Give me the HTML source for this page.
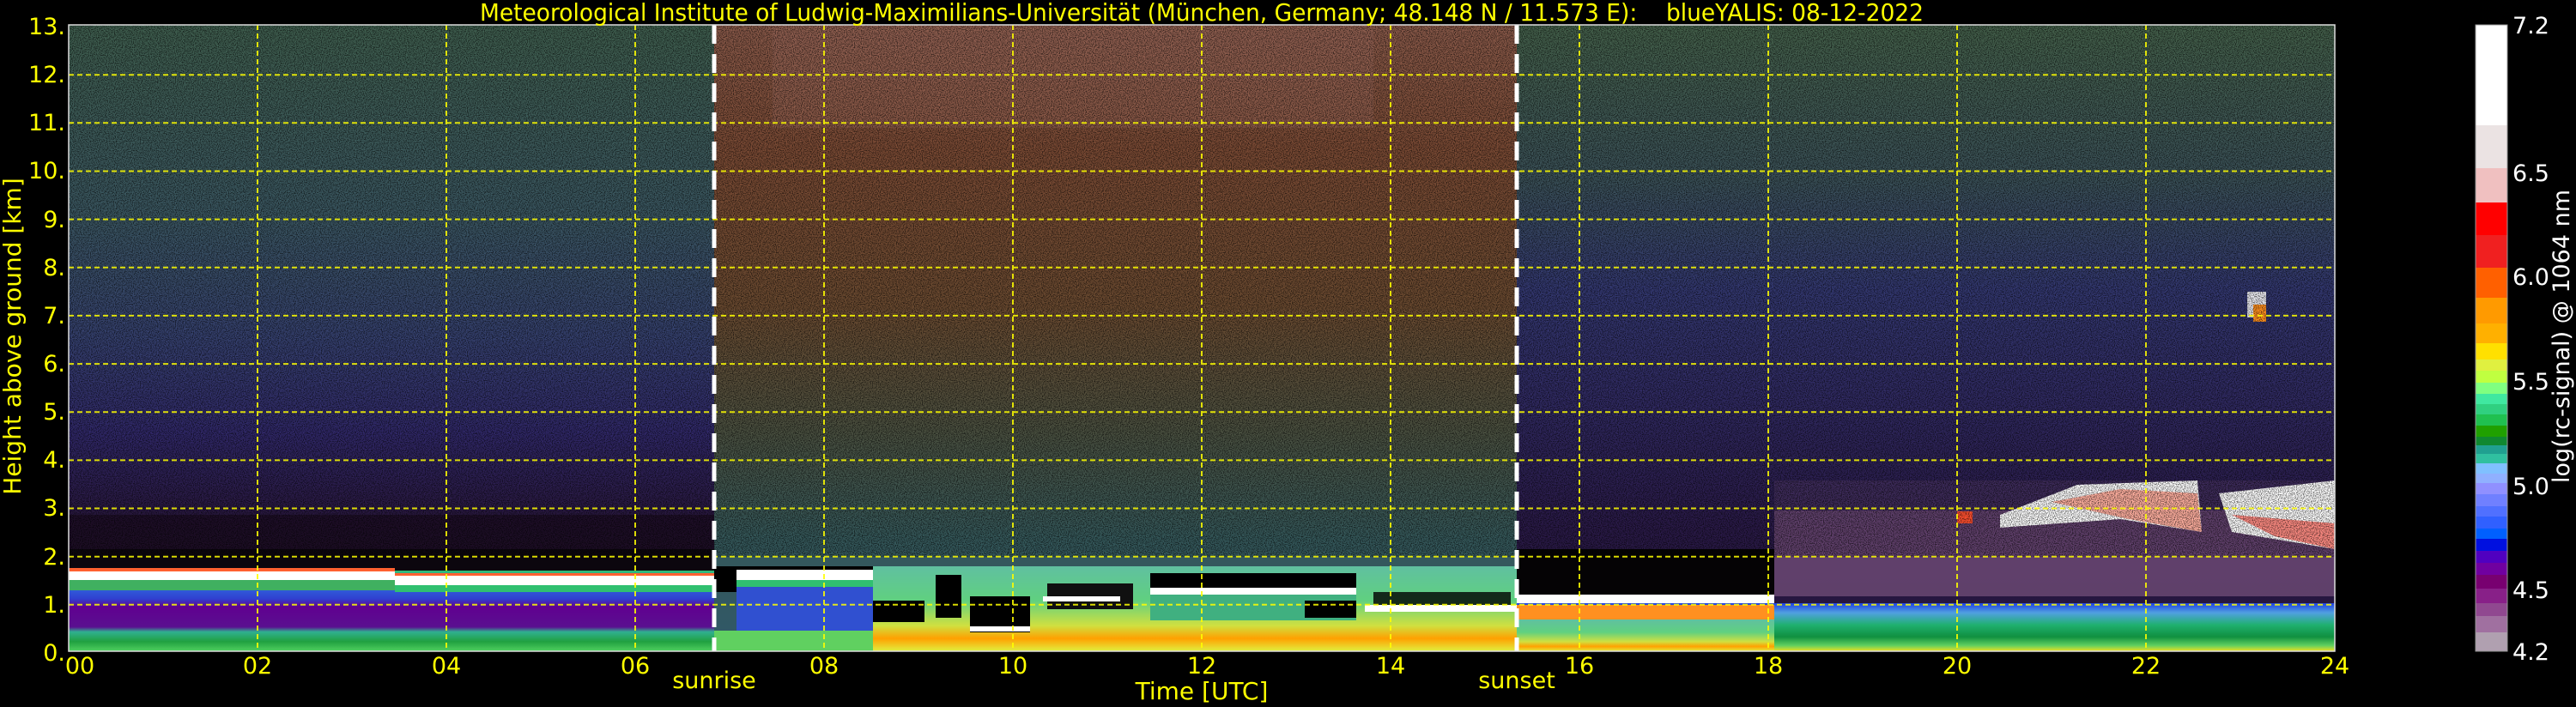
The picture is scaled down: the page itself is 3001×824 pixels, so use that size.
<!DOCTYPE html>
<html><head><meta charset="utf-8"><style>
html,body{margin:0;padding:0;background:#000;}
svg{display:block}
text{font-family:"DejaVu Sans","Liberation Sans",sans-serif;fill:#ffff00}
</style></head><body>
<svg width="3001" height="824" viewBox="0 0 3001 824" xmlns="http://www.w3.org/2000/svg">
<defs>
<filter id="spk" x="0" y="0" width="100%" height="100%">
<feTurbulence type="fractalNoise" baseFrequency="0.9" numOctaves="1" seed="3" result="n"/>
<feColorMatrix type="matrix" values="0 0 0 0 0  0 0 0 0 0  0 0 0 0 0  4 0 0 0 -1.7" />
</filter>
<linearGradient id="gA" x1="0" y1="0" x2="0" y2="1">
<stop offset="0" stop-color="#3f5e4e"/>
<stop offset="0.3" stop-color="#3a5660"/>
<stop offset="0.5" stop-color="#35406e"/>
<stop offset="0.65" stop-color="#302868"/>
<stop offset="0.8" stop-color="#28163a"/>
<stop offset="0.92" stop-color="#1c0c22"/>
<stop offset="1" stop-color="#120812"/>
</linearGradient>
<linearGradient id="gB" x1="0" y1="0" x2="0" y2="1">
<stop offset="0" stop-color="#8a5a4a"/>
<stop offset="0.2" stop-color="#7a4a34"/>
<stop offset="0.45" stop-color="#6a4a30"/>
<stop offset="0.65" stop-color="#4a5040"/>
<stop offset="0.82" stop-color="#35585a"/>
<stop offset="1" stop-color="#305868"/>
</linearGradient>
<linearGradient id="gC" x1="0" y1="0" x2="0" y2="1">
<stop offset="0" stop-color="#44604a"/>
<stop offset="0.25" stop-color="#3a5058"/>
<stop offset="0.42" stop-color="#333870"/>
<stop offset="0.6" stop-color="#302a62"/>
<stop offset="0.8" stop-color="#2a1a48"/>
<stop offset="1" stop-color="#24143a"/>
</linearGradient>
<linearGradient id="blA" x1="0" y1="0" x2="0" y2="1">
<stop offset="0" stop-color="#30c070"/>
<stop offset="0.15" stop-color="#3070e0"/>
<stop offset="0.35" stop-color="#3040d0"/>
<stop offset="0.45" stop-color="#600090"/>
<stop offset="0.7" stop-color="#5a1090"/>
<stop offset="0.76" stop-color="#30b090"/>
<stop offset="0.88" stop-color="#20a040"/>
<stop offset="1" stop-color="#50d060"/>
</linearGradient>
<linearGradient id="blB" x1="0" y1="0" x2="0" y2="1">
<stop offset="0" stop-color="#60c0a0"/>
<stop offset="0.4" stop-color="#60d080"/>
<stop offset="0.7" stop-color="#d0e040"/>
<stop offset="0.85" stop-color="#ffa000"/>
<stop offset="1" stop-color="#e0f040"/>
</linearGradient>
<linearGradient id="blC" x1="0" y1="0" x2="0" y2="1">
<stop offset="0" stop-color="#2040e0"/>
<stop offset="0.2" stop-color="#50a0e0"/>
<stop offset="0.45" stop-color="#20b070"/>
<stop offset="0.7" stop-color="#109040"/>
<stop offset="0.88" stop-color="#60d060"/>
<stop offset="1" stop-color="#f0e020"/>
</linearGradient>
</defs>

<rect x="80" y="29" width="752" height="730" fill="url(#gA)"/>
<rect x="832" y="29" width="935" height="730" fill="url(#gB)"/>
<rect x="1767" y="29" width="953" height="730" fill="url(#gC)"/>
<rect x="900" y="29" width="700" height="120" fill="#9a6a5c" opacity="0.4"/>
<rect x="80" y="640" width="752" height="26" fill="#0c060e"/>
<rect x="80" y="600" width="752" height="40" fill="#1a0c20" opacity="0.7"/>
<rect x="80" y="665" width="752" height="94" fill="url(#blA)"/>
<rect x="80" y="662" width="380" height="6" fill="#ff6030"/>
<rect x="80" y="666" width="380" height="10" fill="#ffffff"/>
<rect x="460" y="668" width="372" height="5" fill="#ff6030"/>
<rect x="460" y="671" width="372" height="11" fill="#ffffff"/>
<rect x="460" y="682" width="372" height="8" fill="#30c070"/>
<rect x="80" y="676" width="380" height="12" fill="#40b060"/>
<rect x="832" y="660" width="185" height="30" fill="#000"/>
<rect x="858" y="664" width="160" height="12" fill="#ffffff"/>
<rect x="858" y="676" width="160" height="8" fill="#30c070"/>
<rect x="858" y="684" width="160" height="55" fill="#3050d0"/>
<rect x="832" y="735" width="185" height="24" fill="#60d060"/>
<rect x="1017" y="660" width="750" height="99" fill="url(#blB)"/>
<rect x="1017" y="700" width="60" height="25" fill="#000"/>
<rect x="1090" y="670" width="30" height="50" fill="#000"/>
<rect x="1130" y="695" width="70" height="42" fill="#000"/>
<rect x="1130" y="730" width="70" height="6" fill="#fff"/>
<rect x="1220" y="680" width="100" height="30" fill="#101010"/>
<rect x="1215" y="695" width="90" height="6" fill="#fff"/>
<rect x="1340" y="668" width="240" height="22" fill="#000"/>
<rect x="1340" y="685" width="240" height="8" fill="#fff"/>
<rect x="1340" y="693" width="240" height="30" fill="#40b080"/>
<rect x="1520" y="700" width="60" height="20" fill="#000"/>
<rect x="1600" y="690" width="160" height="20" fill="#000" opacity="0.8"/>
<rect x="1590" y="705" width="177" height="8" fill="#fff"/>
<rect x="1767" y="640" width="300" height="55" fill="#050305"/>
<rect x="2067" y="595" width="653" height="100" fill="#6a4872" opacity="0.85"/>
<rect x="2067" y="560" width="653" height="35" fill="#4a3460" opacity="0.6"/>
<rect x="1767" y="693" width="300" height="12" fill="#fff"/>
<rect x="1767" y="703" width="953" height="56" fill="url(#blC)"/>
<rect x="1767" y="705" width="300" height="20" fill="#ff9020"/>
<rect x="1767" y="722" width="300" height="37" fill="url(#blB)"/>
<rect x="2280" y="596" width="18" height="14" fill="#ff5030"/>
<path d="M2330 600 L2420 565 L2560 560 L2565 620 L2470 605 L2330 615Z" fill="#fff"/>
<path d="M2390 585 L2470 570 L2560 575 L2565 620 L2480 605Z" fill="#ff6040" opacity="0.5"/>
<path d="M2585 575 L2720 560 L2720 640 L2660 630 L2600 620Z" fill="#fff"/>
<path d="M2600 600 L2720 610 L2720 640 L2650 625Z" fill="#ff4030" opacity="0.6"/>
<rect x="2618" y="340" width="22" height="30" fill="#ffffff" opacity="0.9"/>
<rect x="2625" y="355" width="15" height="20" fill="#ff9020"/>
<rect x="80" y="29" width="2640" height="620" filter="url(#spk)" opacity="0.6"/>

<g stroke="#ffff00" stroke-width="2" stroke-dasharray="6,4" opacity="0.85">
<line x1="80" y1="87.2" x2="2720" y2="87.2"/><line x1="80" y1="143.3" x2="2720" y2="143.3"/>
<line x1="80" y1="199.5" x2="2720" y2="199.5"/><line x1="80" y1="255.6" x2="2720" y2="255.6"/>
<line x1="80" y1="311.8" x2="2720" y2="311.8"/><line x1="80" y1="367.9" x2="2720" y2="367.9"/>
<line x1="80" y1="424.1" x2="2720" y2="424.1"/><line x1="80" y1="480.2" x2="2720" y2="480.2"/>
<line x1="80" y1="536.4" x2="2720" y2="536.4"/><line x1="80" y1="592.5" x2="2720" y2="592.5"/>
<line x1="80" y1="648.7" x2="2720" y2="648.7"/><line x1="80" y1="704.8" x2="2720" y2="704.8"/>
<line x1="300" y1="29" x2="300" y2="759"/><line x1="520" y1="29" x2="520" y2="759"/>
<line x1="740" y1="29" x2="740" y2="759"/><line x1="960" y1="29" x2="960" y2="759"/>
<line x1="1180" y1="29" x2="1180" y2="759"/><line x1="1400" y1="29" x2="1400" y2="759"/>
<line x1="1620" y1="29" x2="1620" y2="759"/><line x1="1840" y1="29" x2="1840" y2="759"/>
<line x1="2060" y1="29" x2="2060" y2="759"/><line x1="2280" y1="29" x2="2280" y2="759"/>
<line x1="2500" y1="29" x2="2500" y2="759"/>
</g>
<g stroke="#fff" stroke-width="5" stroke-dasharray="22,12">
<line x1="832" y1="29" x2="832" y2="759"/><line x1="1767" y1="29" x2="1767" y2="759"/>
</g>
<rect x="80" y="29" width="2640" height="730" fill="none" stroke="#ddd" stroke-width="1.5"/>

<text x="1400" y="24" font-size="28" text-anchor="middle" textLength="1682" lengthAdjust="spacingAndGlyphs">Meteorological Institute of Ludwig-Maximilians-Universität (München, Germany; 48.148 N / 11.573 E):&#160;&#160;&#160;&#160;blueYALIS: 08-12-2022</text>

<g font-size="27" text-anchor="end">
<text x="76" y="40">13.</text><text x="76" y="96">12.</text><text x="76" y="152">11.</text>
<text x="76" y="208">10.</text><text x="76" y="265">9.</text><text x="76" y="321">8.</text>
<text x="76" y="377">7.</text><text x="76" y="433">6.</text><text x="76" y="489">5.</text>
<text x="76" y="545">4.</text><text x="76" y="601">3.</text><text x="76" y="658">2.</text>
<text x="76" y="714">1.</text><text x="76" y="770">0.</text>
</g>
<text transform="translate(24,392) rotate(-90)" font-size="28" text-anchor="middle">Height above ground [km]</text>

<g font-size="27" text-anchor="middle">
<text x="93" y="785">00</text><text x="300" y="785">02</text><text x="520" y="785">04</text>
<text x="740" y="785">06</text><text x="960" y="785">08</text><text x="1180" y="785">10</text>
<text x="1400" y="785">12</text><text x="1620" y="785">14</text><text x="1840" y="785">16</text>
<text x="2060" y="785">18</text><text x="2280" y="785">20</text><text x="2500" y="785">22</text>
<text x="2720" y="785">24</text>
<text x="832" y="802">sunrise</text><text x="1767" y="802">sunset</text>
<text x="1400" y="815" font-size="28">Time [UTC]</text>
</g>

<g>
<rect x="2884" y="29" width="37" height="117" fill="#ffffff"/>
<rect x="2884" y="146" width="37" height="50" fill="#ebe3e3"/>
<rect x="2884" y="196" width="37" height="40" fill="#f0c0c0"/>
<rect x="2884" y="236" width="37" height="38" fill="#ff0000"/>
<rect x="2884" y="274" width="37" height="38" fill="#f02020"/>
<rect x="2884" y="312" width="37" height="35" fill="#ff6000"/>
<rect x="2884" y="347" width="37" height="30" fill="#ff9a00"/>
<rect x="2884" y="377" width="37" height="23" fill="#ffb000"/>
<rect x="2884" y="400" width="37" height="19" fill="#ffe000"/>
<rect x="2884" y="419" width="37" height="13" fill="#e0f040"/>
<rect x="2884" y="432" width="37" height="14" fill="#c0ff40"/>
<rect x="2884" y="446" width="37" height="13" fill="#80ff80"/>
<rect x="2884" y="459" width="37" height="12" fill="#40e8a0"/>
<rect x="2884" y="471" width="37" height="12" fill="#30d080"/>
<rect x="2884" y="483" width="37" height="13" fill="#20c050"/>
<rect x="2884" y="496" width="37" height="13" fill="#20a000"/>
<rect x="2884" y="509" width="37" height="10" fill="#108830"/>
<rect x="2884" y="519" width="37" height="10" fill="#20a090"/>
<rect x="2884" y="529" width="37" height="11" fill="#30c0a0"/>
<rect x="2884" y="540" width="37" height="12" fill="#80c0ff"/>
<rect x="2884" y="552" width="37" height="11" fill="#90b0ff"/>
<rect x="2884" y="563" width="37" height="13" fill="#9090ff"/>
<rect x="2884" y="576" width="37" height="14" fill="#7080ff"/>
<rect x="2884" y="590" width="37" height="12" fill="#5070ff"/>
<rect x="2884" y="602" width="37" height="14" fill="#3060ff"/>
<rect x="2884" y="616" width="37" height="12" fill="#0060ff"/>
<rect x="2884" y="628" width="37" height="14" fill="#0010e0"/>
<rect x="2884" y="642" width="37" height="14" fill="#5000c0"/>
<rect x="2884" y="656" width="37" height="14" fill="#7000a0"/>
<rect x="2884" y="670" width="37" height="16" fill="#780070"/>
<rect x="2884" y="686" width="37" height="17" fill="#882088"/>
<rect x="2884" y="703" width="37" height="15" fill="#904890"/>
<rect x="2884" y="718" width="37" height="19" fill="#a070a0"/>
<rect x="2884" y="737" width="37" height="22" fill="#b0a0b0"/>
<rect x="2884" y="29" width="37" height="730" fill="none" stroke="#999" stroke-width="1"/>
</g>
<g font-size="27">
<text x="2927" y="39" style="fill:#fff">7.2</text>
<text x="2927" y="211" style="fill:#fff">6.5</text>
<text x="2927" y="332" style="fill:#fff">6.0</text>
<text x="2927" y="454" style="fill:#fff">5.5</text>
<text x="2927" y="576" style="fill:#fff">5.0</text>
<text x="2927" y="697" style="fill:#fff">4.5</text>
<text x="2927" y="769" style="fill:#fff">4.2</text>
</g>
<text transform="translate(2993,392) rotate(-90)" font-size="27" text-anchor="middle" style="fill:#fff">log(rc-signal) @ 1064 nm</text>
</svg>
</body></html>
